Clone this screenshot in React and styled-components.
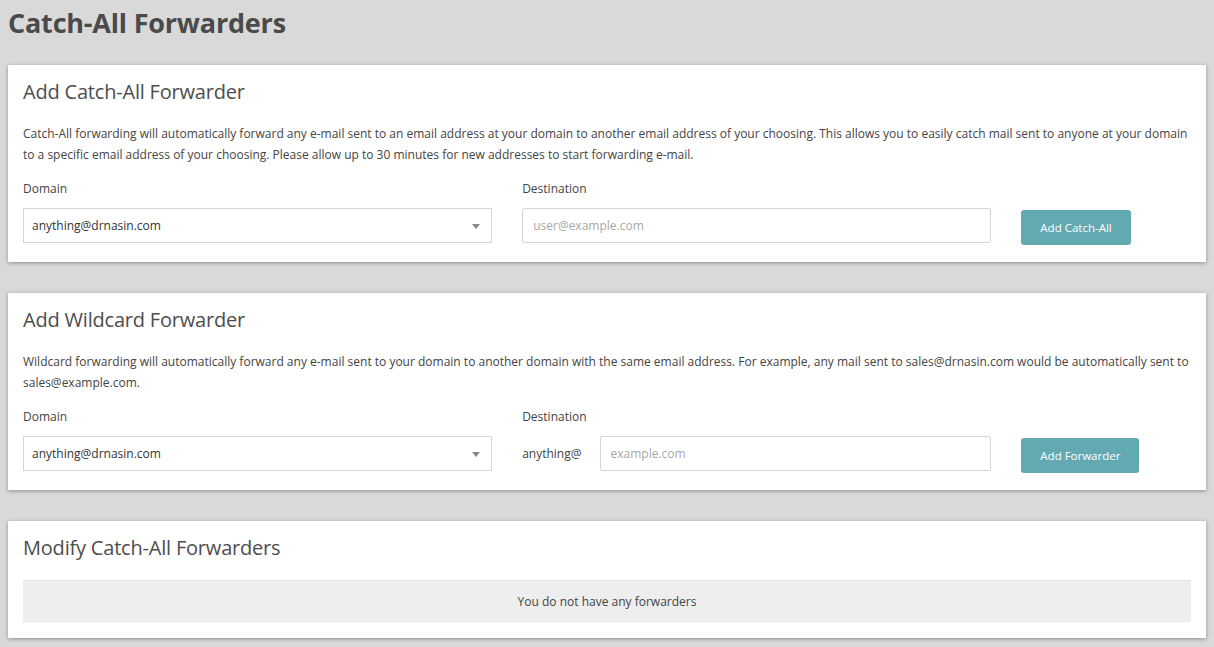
import React from "react";
import styled, { createGlobalStyle } from "styled-components";

const GlobalStyle = createGlobalStyle`
  html, body {
    margin: 0;
    padding: 0;
  }
  body {
    background-color: #d9d9d9;
    font-family: "Open Sans", "Noto Sans", sans-serif;
    color: #444;
  }
  * {
    box-sizing: border-box;
  }
`;

const Page = styled.div`
  padding: 0 8px 8px;
  min-height: 647px;
`;

const PageTitle = styled.h1`
  margin: 0;
  padding: 4px 0 0;
  height: 65px;
  font-size: 27px;
  font-weight: 700;
  letter-spacing: -0.2px;
  color: #4a4a4a;
`;

const Card = styled.section`
  background: #fff;
  box-shadow: 0 1px 4px rgba(0, 0, 0, 0.35);
  padding: 14px 0 ${(p) => p.$bottom || 17}px;
  margin-bottom: 31px;
`;

const CardTitle = styled.h2`
  margin: 0 15px;
  font-size: 20px;
  font-weight: 400;
  letter-spacing: -0.2px;
  color: #4d4d4d;
  line-height: 26px;
`;

const Description = styled.p`
  margin: 18px 15px 0;
  font-size: 12px;
  line-height: 21px;
  letter-spacing: 0;
  color: #444;
`;

const FormRow = styled.div`
  display: grid;
  grid-template-columns: 5fr 5fr 2fr;
  align-items: start;
  margin-top: 14px;
`;

const Field = styled.div`
  padding: 0 15px;
`;

const Label = styled.div`
  font-size: 12px;
  line-height: 20px;
  color: #444;
  margin-bottom: 9px;
`;

const SelectBox = styled.div`
  position: relative;
  height: 35px;
  border: 1px solid #d6d6d6;
  display: flex;
  align-items: center;
  padding: 0 8px;
  font-size: 12px;
  color: #333;
`;

const Caret = styled.span`
  position: absolute;
  right: 11px;
  top: 15px;
  width: 0;
  height: 0;
  border-left: 4px solid transparent;
  border-right: 4px solid transparent;
  border-top: 5px solid #888;
`;

const InputWrap = styled.div`
  display: flex;
  align-items: center;
  gap: 18px;
`;

const Prefix = styled.span`
  font-size: 12px;
  color: #444;
  white-space: nowrap;
`;

const Input = styled.input`
  flex: 1;
  min-width: 0;
  width: 100%;
  height: 35px;
  border: 1px solid #d6d6d6;
  border-radius: 2px;
  padding: 0 10px;
  font-family: inherit;
  font-size: 12px;
  color: #333;
  outline: none;

  &::placeholder {
    color: #a8a8a8;
  }
`;

const ButtonCell = styled.div`
  padding: 31px 15px 0;
`;

const Button = styled.button`
  display: block;
  height: 35px;
  padding: 0 19px;
  border: 0;
  border-radius: 3px;
  background-color: #63a9b2;
  color: #fff;
  font-family: inherit;
  font-size: 11.5px;
  font-weight: 500;
  cursor: pointer;
`;

const EmptyBox = styled.div`
  margin: 19px 15px 0;
  height: 42px;
  background: #eeeeee;
  border-top: 1px solid #e2e2e2;
  border-bottom: 1px solid #e8e8e8;
  display: flex;
  align-items: center;
  justify-content: center;
  font-size: 12px;
  color: #444;
`;

const App = () => {
  return (
    <>
      <GlobalStyle />
      <Page>
        <PageTitle>Catch-All Forwarders</PageTitle>

        <Card>
          <CardTitle>Add Catch-All Forwarder</CardTitle>
          <Description>
            Catch-All forwarding will automatically forward any e-mail sent to an email address at your domain to
            another email address of your choosing. This allows you to easily catch mail sent to anyone at your domain
            to a specific email address of your choosing. Please allow up to 30 minutes for new addresses to start
            forwarding e-mail.
          </Description>
          <FormRow>
            <Field>
              <Label>Domain</Label>
              <SelectBox>
                anything@drnasin.com
                <Caret />
              </SelectBox>
            </Field>
            <Field>
              <Label>Destination</Label>
              <Input placeholder="user@example.com" />
            </Field>
            <ButtonCell>
              <Button>Add Catch-All</Button>
            </ButtonCell>
          </FormRow>
        </Card>

        <Card>
          <CardTitle>Add Wildcard Forwarder</CardTitle>
          <Description>
            Wildcard forwarding will automatically forward any e-mail sent to your domain to another domain with the
            same email address. For example, any mail sent to sales@drnasin.com would be automatically sent to
            sales@example.com.
          </Description>
          <FormRow>
            <Field>
              <Label>Domain</Label>
              <SelectBox>
                anything@drnasin.com
                <Caret />
              </SelectBox>
            </Field>
            <Field>
              <Label>Destination</Label>
              <InputWrap>
                <Prefix>anything@</Prefix>
                <Input placeholder="example.com" />
              </InputWrap>
            </Field>
            <ButtonCell>
              <Button>Add Forwarder</Button>
            </ButtonCell>
          </FormRow>
        </Card>

        <Card $bottom={16}>
          <CardTitle>Modify Catch-All Forwarders</CardTitle>
          <EmptyBox>You do not have any forwarders</EmptyBox>
        </Card>
      </Page>
    </>
  );
};

export default App;
